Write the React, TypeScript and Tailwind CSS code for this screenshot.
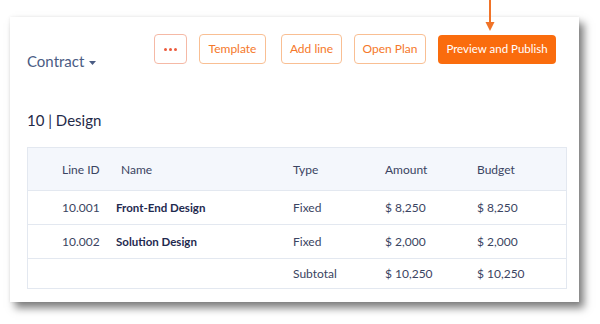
import React from 'react';

const rows = [
  { id: '10.001', name: 'Front-End Design', type: 'Fixed', amount: '$ 8,250', budget: '$ 8,250' },
  { id: '10.002', name: 'Solution Design', type: 'Fixed', amount: '$ 2,000', budget: '$ 2,000' },
];

const cols = 'grid grid-cols-[59px_172px_92px_92px_1fr] pl-[34px] items-center';

export default function App() {
  return (
    <div
      className="relative w-[600px] h-[324px] bg-white overflow-hidden text-[#2b3654]"
      style={{ fontFamily: 'Lato, "Noto Sans", sans-serif' }}
    >
      {/* pointer arrow */}
      <svg className="absolute left-[484px] top-0" width="12" height="32" viewBox="0 0 12 32">
        <line x1="6" y1="0" x2="6" y2="24" stroke="#f07328" strokeWidth="2" />
        <path d="M1.5 22 L6 31 L10.5 22 Z" fill="#f07328" />
      </svg>

      <div className="ml-[10px] mt-[17px] w-[569px] h-[285px] bg-white pl-[17px] pr-[12px] pt-[17px] shadow-[0_0_3px_rgba(0,0,0,0.08),5px_6px_8px_rgba(0,0,0,0.5)]">
        <div className="flex justify-between items-start pr-[11px]">
          <div className="pt-[16px] flex items-center gap-[5px] text-[15px] text-[#4a5c84]">
            Contract
            <svg width="7" height="4" viewBox="0 0 7 4" className="mt-[3px]">
              <path d="M0 0 L7 0 L3.5 4 Z" fill="#4a5c84" />
            </svg>
          </div>
          <div className="flex items-center">
            <button className="w-[33px] h-[30px] rounded-[4px] border border-[#f5b9a6] flex items-center justify-center gap-[2px]">
              <span className="w-[3px] h-[3px] rounded-full bg-[#ec5a3c]" />
              <span className="w-[3px] h-[3px] rounded-full bg-[#ec5a3c]" />
              <span className="w-[3px] h-[3px] rounded-full bg-[#ec5a3c]" />
            </button>
            <button className="ml-[12px] w-[67px] h-[30px] rounded-[4px] border border-[#f9bf93] text-[12px] text-[#f5782a]">
              Template
            </button>
            <button className="ml-[15px] w-[61px] h-[30px] rounded-[4px] border border-[#f9bf93] text-[12px] text-[#f5782a]">
              Add line
            </button>
            <button className="ml-[12px] w-[72px] h-[30px] rounded-[4px] border border-[#f9bf93] text-[12px] text-[#f5782a]">
              Open Plan
            </button>
            <button className="ml-[12px] w-[118px] h-[29px] rounded-[4px] bg-[#fa6c0d] text-[11.5px] text-white">
              Preview and Publish
            </button>
          </div>
        </div>

        <div className="mt-[36px] text-[15px] text-[#1f2a48]">10 | Design</div>

        <div className="mt-[16px] border border-[#e3e8f0] text-[12px]">
          <div className={`${cols} h-[43px] pt-[2px] bg-[#f4f7fc] border-b border-[#e3e8f0] text-[#3a4462]`}>
            <div>Line ID</div>
            <div>Name</div>
            <div>Type</div>
            <div>Amount</div>
            <div>Budget</div>
          </div>
          {rows.map((r) => (
            <div key={r.id} className={`${cols} h-[34px] border-b border-[#e3e8f0] text-[#3a4462]`}>
              <div>{r.id}</div>
              <div className="-ml-[5px] font-bold text-[11.5px] text-[#1f2a4f]">{r.name}</div>
              <div>{r.type}</div>
              <div>{r.amount}</div>
              <div>{r.budget}</div>
            </div>
          ))}
          <div className={`${cols} h-[29px] text-[#3a4462]`}>
            <div />
            <div />
            <div>Subtotal</div>
            <div>$ 10,250</div>
            <div>$ 10,250</div>
          </div>
        </div>
      </div>
    </div>
  );
}
